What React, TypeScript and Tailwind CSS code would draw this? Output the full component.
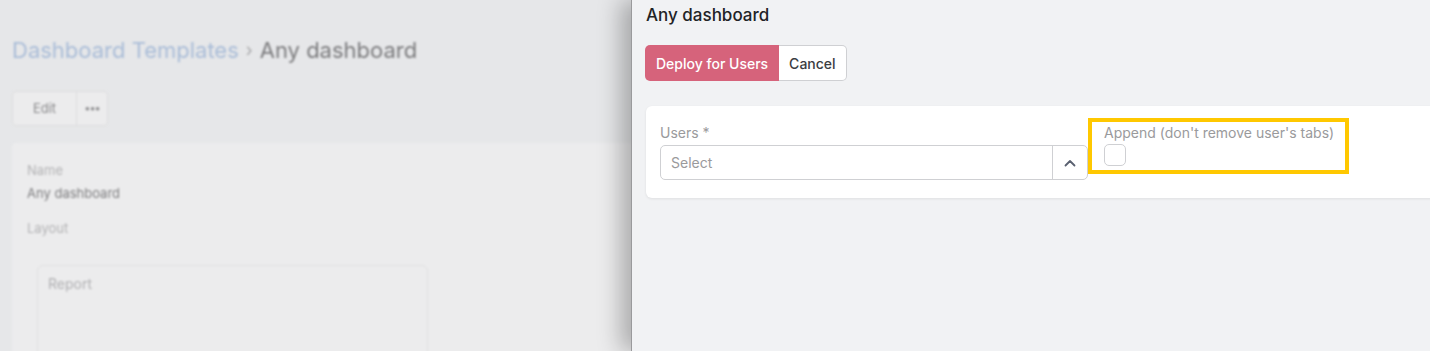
import React from "react";

export default function App() {
  return (
    <div className="relative w-[1430px] h-[351px] overflow-hidden bg-[#e6e7e9] font-['Inter',sans-serif]">
      {/* background page (blurred) */}
      <div className="blur-[1.2px] pl-3 pt-[35px]">
        <div className="flex items-center text-[22px] leading-[30px]">
          <span className="text-[#a9bcd7]">Dashboard Templates</span>
          <span className="text-[#a8a8aa] mx-[7px] text-[18px]">›</span>
          <span className="text-[#7b7b7d]">Any dashboard</span>
        </div>
        <div className="mt-[26px] flex h-[35px] w-[96px] rounded-[4px] border border-[#dcdcdd] bg-[#ececed]">
          <div className="flex w-[64px] items-center justify-center border-r border-[#dcdcdd] text-[13px] text-[#8a8a8c]">Edit</div>
          <div className="flex flex-1 items-center justify-center text-[11px] leading-none text-[#8a8a8c] tracking-[-1px]">•••</div>
        </div>
        <div className="mt-[17px] h-[220px] rounded-[4px] bg-[#ececed] pl-[15px] pt-[18px]">
          <div className="text-[13px] leading-[18px] text-[#b3b3b5]">Name</div>
          <div className="mt-[5px] text-[13px] leading-[18px] text-[#7d7d7f]">Any dashboard</div>
          <div className="mt-[17px] text-[13px] leading-[18px] text-[#b3b3b5]">Layout</div>
          <div className="ml-[10px] mt-[28px] h-[120px] w-[391px] rounded-[6px] border border-[#e0e0e1] pl-[10px] pt-[7px] text-[14px] text-[#b0b0b2]">Report</div>
        </div>
      </div>

      {/* drawer */}
      <div className="absolute left-[631px] top-0 h-[351px] w-[900px] border-l border-[#9a9a9c] bg-[#f1f2f4] pl-[14px] shadow-[-10px_0_22px_rgba(0,0,0,0.28)]">
        <div className="pt-[3px] text-[17px] leading-[24px] text-[#222326] font-medium">Any dashboard</div>
        <div className="-ml-px mt-[18px] flex h-[36px]">
          <button className="rounded-l-[5px] bg-[#d6637b] px-[11px] text-[14px] font-medium text-white">Deploy for Users</button>
          <button className="rounded-r-[5px] border border-l-0 border-[#cfd0d3] bg-white px-[10px] text-[14px] font-medium text-[#3b3d42]">Cancel</button>
        </div>
        <div className="mt-[25px] flex h-[92px] rounded-[6px] bg-white pl-[14px] pt-[17px] shadow-[0_1px_3px_rgba(0,0,0,0.08)]">
          <div className="w-[428px]">
            <div className="text-[14px] leading-[20px] text-[#9a9a9c]">Users *</div>
            <div className="mt-[2px] flex h-[35px] rounded-[5px] border border-[#cfd0d3]">
              <div className="flex flex-1 items-center pl-[10px] text-[14px] text-[#9a9a9c]">Select</div>
              <div className="flex w-[35px] items-center justify-center border-l border-[#cfd0d3]">
                <svg width="12" height="8" viewBox="0 0 12 8" fill="none">
                  <path d="M1.5 6.5 L6 2 L10.5 6.5" stroke="#5a6170" strokeWidth="1.8" strokeLinecap="round" strokeLinejoin="round" />
                </svg>
              </div>
            </div>
          </div>
          <div className="-mt-[5px] h-[56px] w-[261px] border-[4px] border-[#ffc800] pl-[12px] pt-[1px]">
            <div className="text-[14px] leading-[20px] text-[#9a9a9c]">Append (don't remove user's tabs)</div>
            <div className="mt-px h-[22px] w-[22px] rounded-[5px] border border-[#cfd0d3] bg-white" />
          </div>
        </div>
      </div>
    </div>
  );
}
